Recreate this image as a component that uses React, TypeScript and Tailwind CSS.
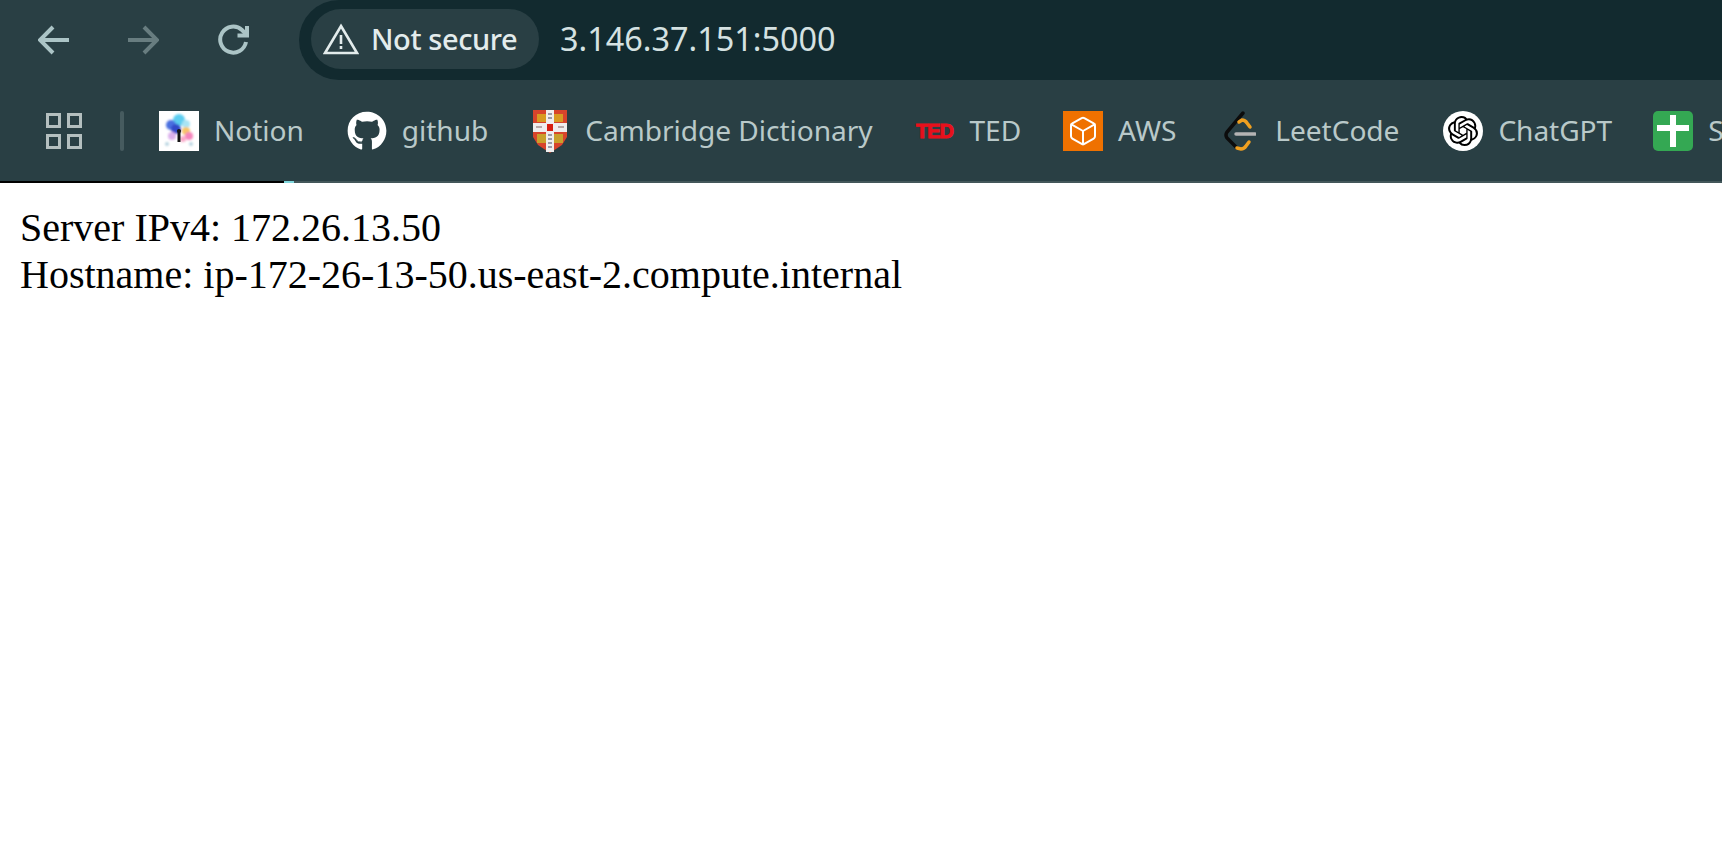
import { Box } from 'lucide-react';
import { FaGithub } from 'react-icons/fa';
import { SiOpenai } from 'react-icons/si';
import type { ReactNode } from 'react';

function NotionIcon() {
    return (
        <svg viewBox="0 0 40 40" className="h-10 w-10">
            <defs>
                <filter id="soft">
                    <feGaussianBlur stdDeviation="1.3" />
                </filter>
            </defs>
            <rect width="40" height="40" fill="#ffffff" />
            <g filter="url(#soft)">
                <circle cx="20" cy="9" r="6" fill="#5ccdf0" />
                <circle cx="12" cy="14" r="5" fill="#4a6fe0" />
                <circle cx="17" cy="18" r="5" fill="#3348c8" />
                <circle cx="27" cy="13" r="4" fill="#a8e4f4" />
                <circle cx="27" cy="20" r="4" fill="#f8c468" />
                <circle cx="30" cy="25" r="4" fill="#f584bc" />
                <circle cx="24" cy="28" r="3" fill="#f9a8c8" />
                <circle cx="13" cy="25" r="4" fill="#dcb0ec" />
                <circle cx="8" cy="33" r="2" fill="#b8d4e0" />
                <circle cx="32" cy="33" r="2" fill="#b8d4e0" />
            </g>
            <rect x="18.5" y="19" width="3" height="12" fill="#151515" />
            <circle cx="20" cy="20" r="2" fill="#151515" />
        </svg>
    );
}

function CambridgeIcon() {
    return (
        <svg viewBox="0 0 36 44" preserveAspectRatio="none" className="h-11 w-[36px]">
            <path d="M1 1H35V28L30 36L18 44L6 36L1 28Z" fill="#d8442c" />
            <rect x="5" y="5" width="9" height="8" fill="#d99a22" />
            <rect x="22" y="5" width="9" height="8" fill="#d99a22" />
            <rect x="5" y="25" width="9" height="9" fill="#c9a02c" />
            <rect x="22" y="25" width="9" height="9" fill="#c9a02c" />
            <rect x="14" y="1" width="8" height="42" fill="#f0eeee" />
            <rect x="1" y="14" width="34" height="9" fill="#f0eeee" />
            <rect x="15" y="15" width="6" height="7" fill="#d81f10" />
            <path d="M16 26H20M16 30H20M16 34H20M16 38H20M16 5H20M16 9H20" stroke="#9a9aa8" strokeWidth="2" />
            <path d="M4 18H10M26 18H32" stroke="#b9a8a8" strokeWidth="2" />
        </svg>
    );
}

function LeetCodeIcon() {
    return (
        <svg viewBox="0 0 32 40" className="h-10 w-8" fill="none" strokeLinecap="round">
            <path d="M19 2L3 21Q1 24 3 27L13 37" stroke="#0c0c0c" strokeWidth="3.5" />
            <path d="M15 11L18 9Q21 9 23 12L26 16" stroke="#f0a020" strokeWidth="3.5" />
            <path d="M13 37L17 38Q20 38 22 35L25 31" stroke="#f0a020" strokeWidth="3.5" />
            <path d="M12 23H31" stroke="#b4b4b4" strokeWidth="3.5" />
        </svg>
    );
}

const bookmarks: { label: string; icon: ReactNode; gap: string }[] = [
    { label: 'Notion', icon: <NotionIcon />, gap: 'mr-[43px]' },
    { label: 'github', icon: <FaGithub className="h-10 w-10 text-white" />, gap: 'mr-[42px]' },
    { label: 'Cambridge Dictionary', icon: <CambridgeIcon />, gap: 'mr-[42px]' },
    {
        label: 'TED',
        icon: (
            <span className="w-10 text-center font-['Liberation_Sans',sans-serif] text-[20px] leading-none font-bold tracking-[-1px] text-[#e8101c] [-webkit-text-stroke:1px_#e8101c]">
                TED
            </span>
        ),
        gap: 'mr-[42px]',
    },
    {
        label: 'AWS',
        icon: (
            <span className="flex h-10 w-10 items-center justify-center bg-[#ef7100]">
                <Box className="h-8 w-8 text-white" strokeWidth={1.5} />
            </span>
        ),
        gap: 'mr-[44px]',
    },
    { label: 'LeetCode', icon: <LeetCodeIcon />, gap: 'mr-[44px]' },
    {
        label: 'ChatGPT',
        icon: (
            <span className="flex h-10 w-10 items-center justify-center rounded-full bg-white">
                <SiOpenai className="h-[30px] w-[30px] text-black" />
            </span>
        ),
        gap: 'mr-[41px]',
    },
    {
        label: 'Sheets',
        icon: (
            <span className="relative h-10 w-10 rounded-[5px] bg-[#34a853]">
                <span className="absolute top-[14px] left-[4px] h-[6px] w-[32px] bg-white" />
                <span className="absolute top-[4px] left-[17px] h-[32px] w-[6px] bg-white" />
            </span>
        ),
        gap: '',
    },
];

export default function App() {
    return (
        <div className="min-h-screen bg-white">
            <header className="h-[183px] overflow-hidden bg-[#293f44] font-['Noto_Sans',sans-serif]">
                <div className="flex h-20 items-center">
                    <div className="flex w-[299px] shrink-0 items-center pb-[1px] pl-[38px]">
                        <svg viewBox="0 0 32 32" className="h-8 w-8" fill="none" stroke="#abc4c6" strokeWidth="4">
                            <path d="M31 16H3M15 3L2 16L15 29" />
                        </svg>
                        <svg viewBox="0 0 32 32" className="ml-[57px] h-8 w-8" fill="none" stroke="#687d80" strokeWidth="4">
                            <path d="M1 16H29M17 3L30 16L17 29" />
                        </svg>
                        <svg viewBox="0 0 32 32" className="ml-[59px] h-8 w-8" fill="none" stroke="#abc4c6" strokeWidth="4">
                            <path d="M28 18A13 13 0 1 1 24 6L29 11" />
                            <path d="M29 2V11.5H19.5" />
                        </svg>
                    </div>
                    <div className="flex h-20 flex-1 items-center rounded-l-[40px] bg-[#122a2f] pb-[3px] pl-3">
                        <div className="flex h-[60px] w-[228px] items-center rounded-[30px] bg-[#293f44] pl-[12px]">
                            <svg viewBox="0 0 36 32" className="h-8 w-9" fill="none" stroke="#e3ecec" strokeWidth="2.6">
                                <path d="M18 3L34 30H2Z" />
                                <path d="M18 12V21M18 23V26" />
                            </svg>
                            <span className="ml-[12px] text-[29px] font-medium tracking-[-0.4px] whitespace-nowrap text-[#e3ecec]">
                                Not secure
                            </span>
                        </div>
                        <span className="ml-[21px] text-[32.4px] font-normal whitespace-nowrap text-[#d5e2e2]">
                            3.146.37.151:5000
                        </span>
                    </div>
                </div>
                <div className="flex h-[101px] items-center pl-[46px] whitespace-nowrap">
                    <div className="grid w-9 shrink-0 grid-cols-[15px_15px] gap-[6px]">
                        <span className="h-[15px] w-[15px] border-[3.5px] border-[#b4bfbf]" />
                        <span className="h-[15px] w-[15px] border-[3.5px] border-[#b4bfbf]" />
                        <span className="h-[15px] w-[15px] border-[3.5px] border-[#b4bfbf]" />
                        <span className="h-[15px] w-[15px] border-[3.5px] border-[#b4bfbf]" />
                    </div>
                    <span className="mr-[35px] ml-[38px] h-10 w-1 shrink-0 rounded bg-[#465b5f]" />
                    {bookmarks.map((b) => (
                        <div key={b.label} className={`flex shrink-0 items-center ${b.gap}`}>
                            <span className="flex h-12 w-10 items-center justify-center">{b.icon}</span>
                            <span className="ml-[15px] text-[28.1px] tracking-[-0.05px] text-[#b9c9c9]">{b.label}</span>
                        </div>
                    ))}
                </div>
                <div className="flex h-[2px] bg-[#43575a]">
                    <span className="w-[284px] bg-black" />
                    <span className="w-[10px] bg-[#7fd6dc]" />
                </div>
            </header>
            <main className="px-5 pt-[21px] font-['Liberation_Serif',serif] text-[40px] leading-[47px] text-black">
                <div>Server IPv4: 172.26.13.50</div>
                <div>Hostname: ip-172-26-13-50.us-east-2.compute.internal</div>
            </main>
        </div>
    );
}
